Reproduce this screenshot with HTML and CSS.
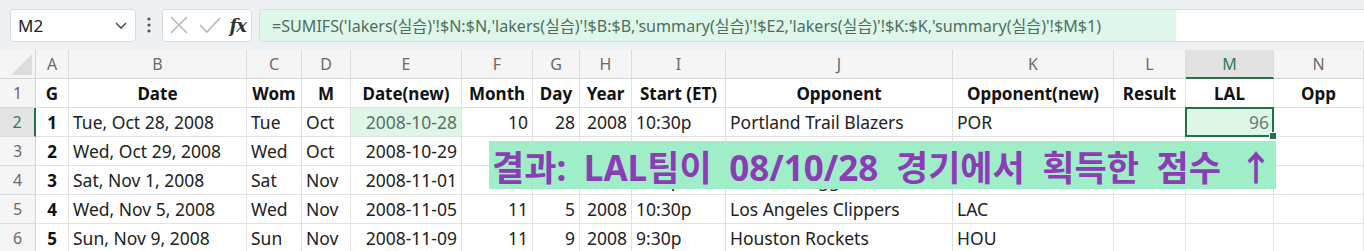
FILE: index.html
```html
<!DOCTYPE html>
<html lang="ko">
<head>
<meta charset="utf-8">
<title>Sheet</title>
<link rel="stylesheet" href="styles.css">
</head>
<body>
<div class="toolbar">
  <div class="namebox">
    <span class="nb-text">M2</span>
    <svg class="chev" width="14" height="10" viewBox="0 0 14 10"><polyline points="2,3 7,8 12,3" fill="none" stroke="#555" stroke-width="1.6"/></svg>
  </div>
  <svg class="vdots" width="6" height="18" viewBox="0 0 6 18"><circle cx="3" cy="3" r="1.6" fill="#555"/><circle cx="3" cy="9" r="1.6" fill="#555"/><circle cx="3" cy="15" r="1.6" fill="#555"/></svg>
  <div class="fxbox">
    <svg width="22" height="22" viewBox="0 0 22 22"><path d="M3 3 L19 19 M19 3 L3 19" stroke="#b8b8b8" stroke-width="1.6" fill="none"/></svg>
    <svg width="24" height="22" viewBox="0 0 24 22"><path d="M2 11 L9 18 L22 4" stroke="#b8b8b8" stroke-width="1.6" fill="none"/></svg>
    <span class="fx">fx</span>
  </div>
  <div class="formula"><span class="ftext">=SUMIFS('lakers(실습)'!$N:$N,'lakers(실습)'!$B:$B,'summary(실습)'!$E2,'lakers(실습)'!$K:$K,'summary(실습)'!$M$1)</span></div>
</div>
<div class="sheet">
  <div class="corner"></div>
  <div class="ch">A</div><div class="ch">B</div><div class="ch">C</div><div class="ch">D</div><div class="ch">E</div><div class="ch">F</div><div class="ch">G</div><div class="ch">H</div><div class="ch">I</div><div class="ch">J</div><div class="ch">K</div><div class="ch">L</div><div class="ch ch-sel">M</div><div class="ch">N</div>

  <div class="rh">1</div>
  <div class="c b ctr">G</div><div class="c b ctr">Date</div><div class="c b ctr">Wom</div><div class="c b ctr">M</div><div class="c b ctr">Date(new)</div><div class="c b ctr">Month</div><div class="c b ctr">Day</div><div class="c b ctr">Year</div><div class="c b ctr">Start (ET)</div><div class="c b ctr">Opponent</div><div class="c b ctr">Opponent(new)</div><div class="c b ctr">Result</div><div class="c b ctr">LAL</div><div class="c b ctr">Opp</div>

  <div class="rh rh-sel">2</div>
  <div class="c b ctr">1</div><div class="c">Tue, Oct 28, 2008</div><div class="c">Tue</div><div class="c">Oct</div><div class="c r ref">2008-10-28</div><div class="c r">10</div><div class="c r">28</div><div class="c r">2008</div><div class="c">10:30p</div><div class="c">Portland Trail Blazers</div><div class="c">POR</div><div class="c"></div><div class="c r sel">96</div><div class="c"></div>

  <div class="rh">3</div>
  <div class="c b ctr">2</div><div class="c">Wed, Oct 29, 2008</div><div class="c">Wed</div><div class="c">Oct</div><div class="c r">2008-10-29</div><div class="c r">10</div><div class="c r">29</div><div class="c r">2008</div><div class="c">10:30p</div><div class="c">Los Angeles Clippers</div><div class="c">LAC</div><div class="c"></div><div class="c"></div><div class="c"></div>

  <div class="rh">4</div>
  <div class="c b ctr">3</div><div class="c">Sat, Nov 1, 2008</div><div class="c">Sat</div><div class="c">Nov</div><div class="c r">2008-11-01</div><div class="c r">11</div><div class="c r">1</div><div class="c r">2008</div><div class="c">8:30p</div><div class="c">Denver Nuggets</div><div class="c">DEN</div><div class="c"></div><div class="c"></div><div class="c"></div>

  <div class="rh">5</div>
  <div class="c b ctr">4</div><div class="c">Wed, Nov 5, 2008</div><div class="c">Wed</div><div class="c">Nov</div><div class="c r">2008-11-05</div><div class="c r">11</div><div class="c r">5</div><div class="c r">2008</div><div class="c">10:30p</div><div class="c">Los Angeles Clippers</div><div class="c">LAC</div><div class="c"></div><div class="c"></div><div class="c"></div>

  <div class="rh">6</div>
  <div class="c b ctr">5</div><div class="c">Sun, Nov 9, 2008</div><div class="c">Sun</div><div class="c">Nov</div><div class="c r">2008-11-09</div><div class="c r">11</div><div class="c r">9</div><div class="c r">2008</div><div class="c">9:30p</div><div class="c">Houston Rockets</div><div class="c">HOU</div><div class="c"></div><div class="c"></div><div class="c"></div>

  <div class="banner">결과: LAL팀이 08/10/28 경기에서 획득한 점수 ↑</div>
</div>
</body>
</html>
```

FILE: styles.css
```css
* { box-sizing: border-box; }
html, body { margin: 0; padding: 0; }
body {
  width: 1364px;
  height: 251px;
  overflow: hidden;
  background: #ffffff;
  font-family: "Noto Sans", "Noto Sans CJK KR", sans-serif;
  color: #1f1f1f;
}
.toolbar {
  height: 50px;
  background: #eef1f4;
  display: flex;
  align-items: center;
  padding: 0 0 0 10px;
}
.namebox {
  width: 126px;
  height: 33px;
  background: #fff;
  border: 1px solid #d9dcdf;
  border-radius: 4px;
  display: flex;
  align-items: center;
  justify-content: space-between;
  padding: 0 7px 0 7px;
}
.nb-text { font-size: 17px; color: #222; }
.vdots { margin: 0 10px 0 10px; }
.fxbox {
  width: 90px;
  height: 33px;
  background: #fff;
  border: 1px solid #d9dcdf;
  border-radius: 4px;
  display: flex;
  align-items: center;
  justify-content: space-between;
  padding: 0 5px 0 5px;
}
.fx {
  font-family: "DejaVu Serif", "Liberation Serif", serif;
  font-style: italic;
  font-weight: bold;
  font-size: 18px;
  color: #333;
  letter-spacing: -1px;
}
.formula {
  margin-left: 7px;
  flex: 1;
  height: 33px;
  background: #fff;
  border: 1px solid #d9dcdf;
  border-right: none;
  border-radius: 4px 0 0 4px;
  display: flex;
  align-items: stretch;
  overflow: hidden;
}
.ftext {
  background: #ddf8ea;
  padding: 0 75px 0 12px;
  display: flex;
  align-items: center;
  font-size: 16.1px;
  color: #4f6d5d;
  white-space: nowrap;
}
.sheet {
  position: relative;
  display: grid;
  grid-template-columns: 36px 33px 178px 55px 49px 111px 71px 47px 52px 94px 227px 161px 72px 88px 90px;
  grid-auto-rows: 29px;
  font-size: 17.5px;
}
.corner {
  background: #f5f5f5;
  border-right: 1px solid #d4d4d4;
  border-bottom: 1px solid #d4d4d4;
  position: relative;
}
.corner::after {
  content: "";
  position: absolute;
  right: 3px;
  bottom: 3px;
  width: 21px;
  height: 21px;
  background: #dcdcdc;
  clip-path: polygon(100% 0, 100% 100%, 0 100%);
}
.ch {
  background: #f5f5f5;
  border-right: 1px solid #dcdcdc;
  border-bottom: 1px solid #d4d4d4;
  color: #6a6a6a;
  font-size: 16px;
  display: flex;
  align-items: center;
  justify-content: center;
}
.ch-sel {
  background: #e1e1e1;
  color: #2e7d55;
  border-bottom: 2px solid #217346;
}
.rh {
  background: #f5f5f5;
  border-right: 1px solid #d4d4d4;
  border-bottom: 1px solid #dcdcdc;
  color: #6a6a6a;
  font-size: 16px;
  display: flex;
  align-items: center;
  justify-content: center;
}
.rh-sel {
  background: #e3e3e3;
  color: #2e7d55;
  border-right: 2px solid #217346;
}
.c {
  border-right: 1px solid #e1e1e1;
  border-bottom: 1px solid #e1e1e1;
  display: flex;
  align-items: center;
  padding: 0 4px;
  white-space: nowrap;
  overflow: hidden;
  color: #222;
}
.b { font-weight: bold; color: #111; font-size: 17px; }
.ctr { justify-content: center; }
.r { justify-content: flex-end; }
.ref { background: #dcf7e8; color: #5e6f65; }
.sel {
  background: #dcf7e8;
  color: #6d7c73;
  position: relative;
  overflow: visible;
}
.sel::before {
  content: "";
  position: absolute;
  left: -1px;
  top: -1px;
  right: -1px;
  bottom: -1px;
  border: 2px solid #217346;
}
.sel::after {
  content: "";
  position: absolute;
  right: -4px;
  bottom: -4px;
  width: 6px;
  height: 6px;
  background: #217346;
  border: 1px solid #fff;
}
.banner {
  position: absolute;
  left: 489px;
  top: 91px;
  width: 787px;
  height: 48px;
  background: #a0eec8;
  color: #8a3db5;
  font-family: "Noto Sans", "Noto Sans CJK KR", sans-serif;
  font-weight: bold;
  font-size: 35px;
  display: flex;
  align-items: center;
  padding-left: 3px;
  white-space: pre;
  word-spacing: 8.5px;
}
```
